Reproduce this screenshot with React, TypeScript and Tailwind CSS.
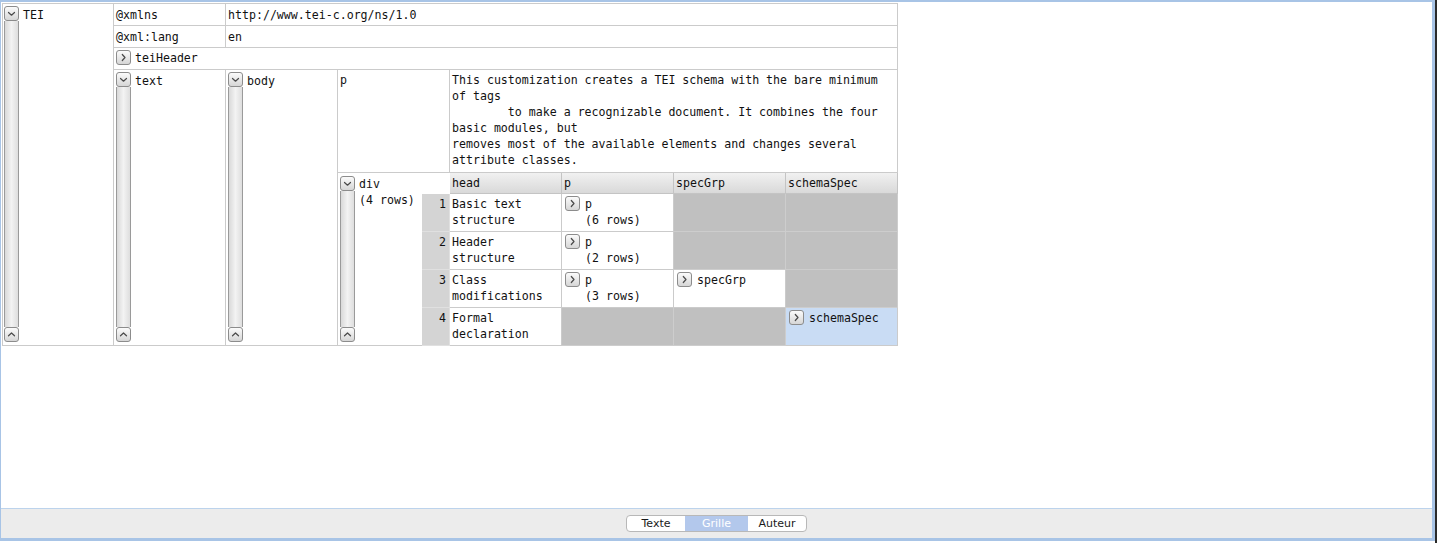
import React from "react";

const B = "border-[#cbcbcb]";

function Chevron({ dir }: { dir: "down" | "up" | "right" }) {
  const d =
    dir === "down"
      ? "M1.5 3.5 L4.5 6.2 L7.5 3.5"
      : dir === "up"
      ? "M1.5 5.8 L4.5 3 L7.5 5.8"
      : "M3.3 1.5 L6 4.5 L3.3 7.5";
  return (
    <svg width="9" height="9" viewBox="0 0 9 9">
      <path d={d} fill="none" stroke="#4a4a4a" strokeWidth="1.2" strokeLinecap="round" strokeLinejoin="round" />
    </svg>
  );
}

function Btn({ dir }: { dir: "down" | "up" | "right" }) {
  return (
    <div className="flex h-[15px] w-[15px] shrink-0 items-center justify-center rounded-[3px] border border-[#8c8c8c] bg-linear-to-b from-[#fbfbfb] to-[#d6d6d6]">
      <Chevron dir={dir} />
    </div>
  );
}

function Track() {
  return (
    <div className="flex w-[15px] shrink-0 flex-col self-stretch">
      <Btn dir="down" />
      <div className="flex-1 border-x border-[#9a9a9a] bg-linear-to-r from-[#d9d9d9] via-[#f3f3f3] to-[#dedede]" />
      <Btn dir="up" />
    </div>
  );
}

function Expand({ children }: { children: React.ReactNode }) {
  return (
    <div className="flex items-start gap-[5px]">
      <Btn dir="right" />
      <div>{children}</div>
    </div>
  );
}

export default function App() {
  const cell = `border-r border-b ${B}`;
  const empty = `border-r border-b border-[#cdcdcd] bg-[#c0c0c0]`;
  const head = `border-r border-b border-[#c4c4c4] bg-linear-to-b from-[#f1f1f1] to-[#d9d9d9] pl-[2px] pt-[2px]`;
  const num = `border-r border-b border-[#e0e0e0] bg-[#d4d4d4] pr-[3px] pt-[2px] text-right`;
  const data = `${cell} pl-[2px] pr-[2px] pt-[2px]`;
  const pcell = `${cell} pl-[3px] pt-[2px]`;

  return (
    <div className="flex h-[543px] w-[1437px] bg-white">
      <div className="flex h-[541px] flex-1 flex-col border-t-2 border-r-[3px] border-b-[3px] border-l border-[#a8c4e6]">
        <div className="flex-1 bg-white">
          <div
            className={`ml-px mt-px grid w-max grid-cols-[111px_112px_112px_84px_28px_112px_112px_112px_112px] grid-rows-[22px_22px_22px_103px_21px_38px_38px_38px_38px] border-l border-t ${B} font-['DejaVu_Sans_Mono',monospace] text-[11.6px] leading-[16px] text-[#111]`}
          >
            {/* TEI */}
            <div className={`${cell} col-start-1 row-start-1 row-span-9 flex gap-[4px] pl-[1px] pt-[2px] pb-[3px]`}>
              <Track />
              <div className="pt-[1px]">TEI</div>
            </div>

            <div className={`${cell} col-start-2 row-start-1 pl-[2px] pt-[3px]`}>@xmlns</div>
            <div className={`${cell} col-start-3 col-span-7 row-start-1 pl-[2px] pt-[3px]`}>
              http://www.tei-c.org/ns/1.0
            </div>

            <div className={`${cell} col-start-2 row-start-2 pl-[2px] pt-[3px]`}>@xml:lang</div>
            <div className={`${cell} col-start-3 col-span-7 row-start-2 pl-[2px] pt-[3px]`}>en</div>

            <div className={`${cell} col-start-2 col-span-8 row-start-3 flex items-start gap-[4px] pl-[2px] pt-[2px]`}>
              <Btn dir="right" />
              <div>teiHeader</div>
            </div>

            {/* text */}
            <div className={`${cell} col-start-2 row-start-4 row-span-6 flex gap-[4px] pl-[2px] pt-[2px] pb-[3px]`}>
              <Track />
              <div className="pt-[1px]">text</div>
            </div>

            {/* body */}
            <div className={`${cell} col-start-3 row-start-4 row-span-6 flex gap-[4px] pl-[2px] pt-[2px] pb-[3px]`}>
              <Track />
              <div className="pt-[1px]">body</div>
            </div>

            {/* p */}
            <div className={`${cell} col-start-4 col-span-2 row-start-4 pl-[2px] pt-[2px]`}>p</div>
            <div className={`${cell} col-start-6 col-span-4 row-start-4 whitespace-pre-wrap pl-[2px] pr-[12px] pt-[2px]`}>
              {"This customization creates a TEI schema with the bare minimum of tags\n        to make a recognizable document. It combines the four basic modules, but\nremoves most of the available elements and changes several attribute classes."}
            </div>

            {/* div */}
            <div className={`border-b ${B} col-start-4 row-start-5 row-span-5 flex gap-[4px] pl-[2px] pt-[3px] pb-[3px]`}>
              <Track />
              <div className="whitespace-pre">{"div\n(4 rows)"}</div>
            </div>
            <div className="col-start-5 row-start-5" />

            <div className={`${head} col-start-6 row-start-5`}>head</div>
            <div className={`${head} col-start-7 row-start-5`}>p</div>
            <div className={`${head} col-start-8 row-start-5`}>specGrp</div>
            <div className={`${head} col-start-9 row-start-5`}>schemaSpec</div>

            {/* row 1 */}
            <div className={`${num} col-start-5 row-start-6`}>1</div>
            <div className={`${data} col-start-6 row-start-6`}>Basic text structure</div>
            <div className={`${pcell} col-start-7 row-start-6`}>
              <Expand>
                <div>p</div>
                <div>(6 rows)</div>
              </Expand>
            </div>
            <div className={`${empty} col-start-8 row-start-6`} />
            <div className={`${empty} col-start-9 row-start-6`} />

            {/* row 2 */}
            <div className={`${num} col-start-5 row-start-7`}>2</div>
            <div className={`${data} col-start-6 row-start-7`}>Header structure</div>
            <div className={`${pcell} col-start-7 row-start-7`}>
              <Expand>
                <div>p</div>
                <div>(2 rows)</div>
              </Expand>
            </div>
            <div className={`${empty} col-start-8 row-start-7`} />
            <div className={`${empty} col-start-9 row-start-7`} />

            {/* row 3 */}
            <div className={`${num} col-start-5 row-start-8`}>3</div>
            <div className={`${data} col-start-6 row-start-8`}>Class modifications</div>
            <div className={`${pcell} col-start-7 row-start-8`}>
              <Expand>
                <div>p</div>
                <div>(3 rows)</div>
              </Expand>
            </div>
            <div className={`${pcell} col-start-8 row-start-8`}>
              <Expand>
                <div>specGrp</div>
              </Expand>
            </div>
            <div className={`${empty} col-start-9 row-start-8`} />

            {/* row 4 */}
            <div className={`${num} col-start-5 row-start-9`}>4</div>
            <div className={`${data} col-start-6 row-start-9`}>Formal declaration</div>
            <div className={`${empty} col-start-7 row-start-9`} />
            <div className={`${empty} col-start-8 row-start-9`} />
            <div className={`${pcell} col-start-9 row-start-9 bg-[#c9dcf4]`}>
              <Expand>
                <div>schemaSpec</div>
              </Expand>
            </div>
          </div>
        </div>

        <div className="flex h-[30px] items-center justify-center border-t border-[#bcd3ec] bg-[#ececec]">
          <div className="flex h-[17px] overflow-hidden rounded-[4px] border border-[#b8b8b8] bg-white font-['DejaVu_Sans',sans-serif] text-[11px] leading-[15px] text-[#1a1a1a]">
            <div className="flex w-[58px] items-center justify-center">Texte</div>
            <div className="flex w-[63px] items-center justify-center bg-[#b3c8ec] text-white">Grille</div>
            <div className="flex w-[58px] items-center justify-center">Auteur</div>
          </div>
        </div>
      </div>
      <div className="h-full w-[2px] bg-[#2a2a2a]" />
    </div>
  );
}
